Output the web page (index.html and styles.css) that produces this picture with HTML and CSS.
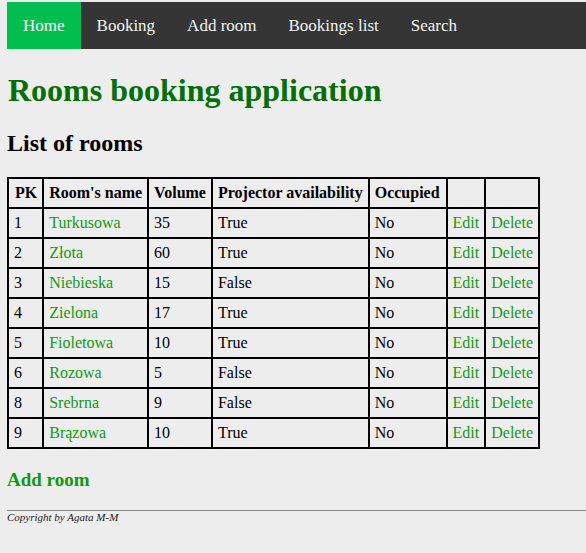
FILE: index.html
```html
<!DOCTYPE html>
<html>
<head>
<meta charset="utf-8">
<link rel="stylesheet" href="styles.css">
</head>
<body>
<nav class="topnav">
  <a class="active" href="#">Home</a>
  <a href="#">Booking</a>
  <a href="#">Add room</a>
  <a href="#">Bookings list</a>
  <a href="#">Search</a>
</nav>
<h1 class="title">Rooms booking application</h1>
<h2 class="subtitle">List of rooms</h2>
<table class="rooms">
  <tr><th class="pk">PK</th><th>Room's name</th><th>Volume</th><th>Projector availability</th><th class="occ">Occupied</th><th></th><th></th></tr>
  <tr><td>1</td><td><a href="#">Turkusowa</a></td><td>35</td><td>True</td><td>No</td><td><a href="#">Edit</a></td><td><a href="#">Delete</a></td></tr>
  <tr><td>2</td><td><a href="#">Złota</a></td><td>60</td><td>True</td><td>No</td><td><a href="#">Edit</a></td><td><a href="#">Delete</a></td></tr>
  <tr><td>3</td><td><a href="#">Niebieska</a></td><td>15</td><td>False</td><td>No</td><td><a href="#">Edit</a></td><td><a href="#">Delete</a></td></tr>
  <tr><td>4</td><td><a href="#">Zielona</a></td><td>17</td><td>True</td><td>No</td><td><a href="#">Edit</a></td><td><a href="#">Delete</a></td></tr>
  <tr><td>5</td><td><a href="#">Fioletowa</a></td><td>10</td><td>True</td><td>No</td><td><a href="#">Edit</a></td><td><a href="#">Delete</a></td></tr>
  <tr><td>6</td><td><a href="#">Rozowa</a></td><td>5</td><td>False</td><td>No</td><td><a href="#">Edit</a></td><td><a href="#">Delete</a></td></tr>
  <tr><td>8</td><td><a href="#">Srebrna</a></td><td>9</td><td>False</td><td>No</td><td><a href="#">Edit</a></td><td><a href="#">Delete</a></td></tr>
  <tr><td>9</td><td><a href="#">Brązowa</a></td><td>10</td><td>True</td><td>No</td><td><a href="#">Edit</a></td><td><a href="#">Delete</a></td></tr>
</table>
<h3 class="add"><a href="#">Add room</a></h3>
<hr class="rule">
<p class="copy">Copyright by Agata M-M</p>
</body>
</html>
```
FILE: styles.css
```css
html { background: #ededed; }
body {
  margin: 2px 0 0 7px;
  font-family: "Liberation Serif", "Times New Roman", serif;
  background: #ededed;
  color: #000;
}
.topnav {
  display: flex;
  background: #353535;
}
.topnav a {
  display: block;
  color: #f2f2f2;
  text-decoration: none;
  font-size: 17px;
  padding: 14px 16px;
  line-height: 19px;
}
.topnav a.active {
  background: #00bf4f;
  color: #fff;
}
.title {
  color: #007000;
  font-size: 32px;
  margin: 23px 0 0 1px;
}
.subtitle {
  font-size: 24px;
  margin: 21px 0 0 0;
}
.rooms {
  border-collapse: collapse;
  margin-top: 20px;
  font-size: 16px;
}
.rooms th, .rooms td {
  border: 2px solid #000;
  padding: 5px 5px;
  text-align: left;
  line-height: 18px;
}
.rooms th.pk { padding-left: 6px; }
.rooms th.occ { padding-right: 6px; }
.rooms a { color: #109a10; text-decoration: none; }
.add {
  font-size: 19px;
  margin: 20px 0 0 0;
}
.add a { color: #109a10; text-decoration: none; }
.rule {
  margin: 19px 0 0 0;
  border: 0;
  border-top: 1px solid #888;
  height: 0;
}
.copy {
  font-size: 11px;
  font-style: italic;
  margin: 0;
  color: #222;
}
```
